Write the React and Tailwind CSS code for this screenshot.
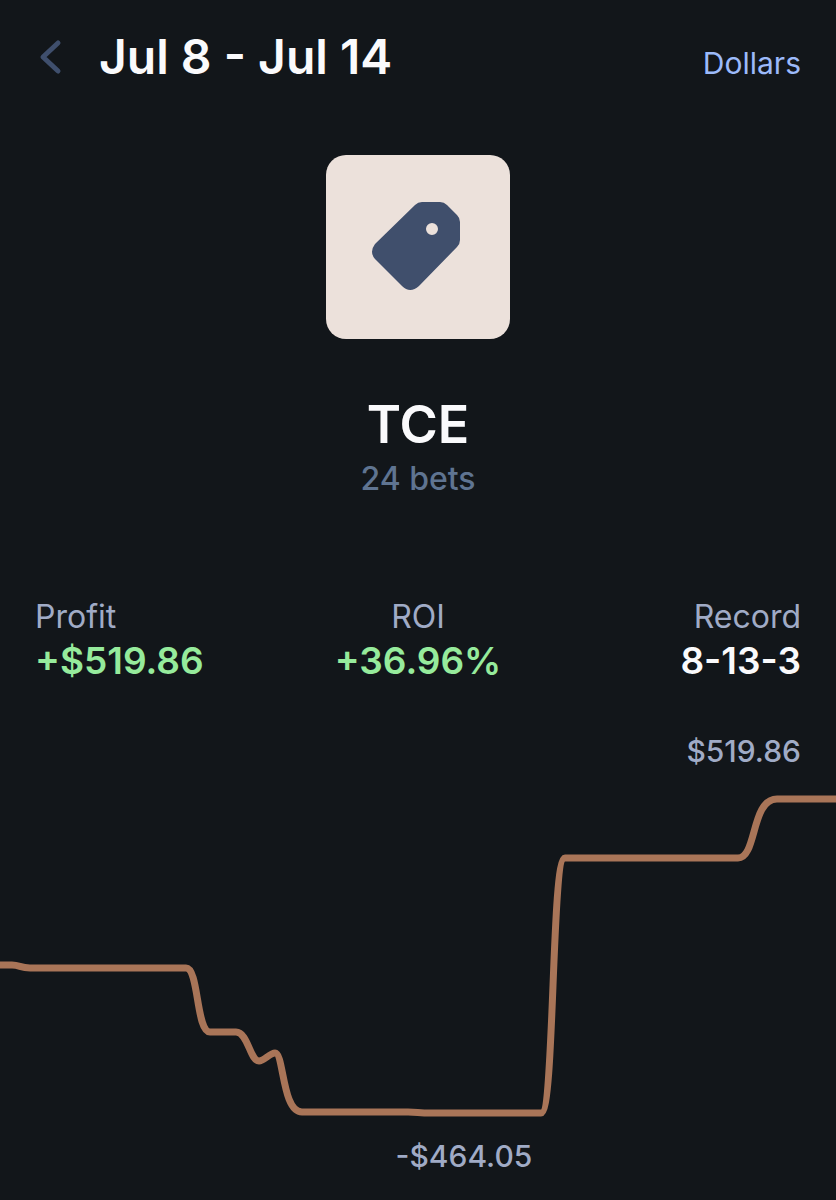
const stats = [
  { label: "Profit", value: "+$519.86", align: "text-left", color: "text-[#96eb9c]" },
  { label: "ROI", value: "+36.96%", align: "text-center", color: "text-[#96eb9c]" },
  { label: "Record", value: "8-13-3", align: "text-right", color: "text-[#fafafc]" },
];

const profitLine = [
  "M-6 179 H12 C20 179 20 182 30 182 H186",
  "C199 182 196 246 210 246 H236",
  "C248 246 250 275 259 275 C264 275 270 267 275 267",
  "C284 267 282 326 302 326 H408 C416 326 420 327 430 327 H541",
  "C555 327 551 72 565 72 H738",
  "C757 72 751 13 777 13 H842",
].join(" ");

function Header() {
  return (
    <header className="flex items-center px-[35px] pt-6">
      <button type="button" aria-label="Back" className="flex h-16 w-8 items-center">
        <svg viewBox="0 0 32 40" className="h-10 w-8" fill="none" stroke="#3f4f6d" strokeWidth="5" strokeLinecap="round" strokeLinejoin="round">
          <path d="M23 6 L8 20 L23 34" />
        </svg>
      </button>
      <h1 className="ml-8 text-[48px] leading-[66px] font-semibold text-[#fafafc]">Jul 8 - Jul 14</h1>
      <button type="button" className="ml-auto pt-3 text-[30px] leading-12 text-[#9cbafa]">
        Dollars
      </button>
    </header>
  );
}

function Summary() {
  return (
    <section className="flex flex-col items-center pt-[65px]">
      <div className="flex h-46 w-46 items-center justify-center rounded-[20px] bg-[#ece1db]">
        <svg viewBox="0 0 90 90" className="h-[90px] w-[90px] overflow-visible" fill="#404f6c">
          <path
            fillRule="evenodd"
            d="M49 0 H67 Q71 0 74 3 L84 13 Q87 16 87 20 V38 Q87 42 84 45 L46 84 Q37 92 29 84 L2 57 Q-4 50 2 42 L42 3 Q45 0 49 0 Z M59 21 A6 6 0 1 0 59 33 A6 6 0 1 0 59 21 Z"
          />
        </svg>
      </div>
      <h2 className="mt-[54px] text-[52px] leading-16 font-semibold text-[#fafafc]">TCE</h2>
      <p className="mt-[2px] text-[32px] leading-10 font-medium text-[#5f7491]">24 bets</p>
    </section>
  );
}

function Stats() {
  return (
    <dl className="grid grid-cols-3 px-[35px] pt-[98px]">
      {stats.map((stat) => (
        <div key={stat.label} className={stat.align}>
          <dt className="text-[32px] leading-10 text-[#a0abc6]">{stat.label}</dt>
          <dd className={`text-[37px] leading-12 font-semibold ${stat.color}`}>{stat.value}</dd>
        </div>
      ))}
    </dl>
  );
}

function ProfitChart() {
  return (
    <section className="pt-[46px] text-[30px] leading-10 font-medium text-[#a0abc6]">
      <p className="px-[35px] text-right">$519.86</p>
      <svg viewBox="0 0 836 340" className="mt-[15px] block w-full overflow-hidden" fill="none" role="img" aria-label="Profit over time">
        <path d={profitLine} stroke="#a97558" strokeWidth="7" strokeLinejoin="round" />
      </svg>
      <p className="mt-[10px] pl-[11%] text-center">-$464.05</p>
    </section>
  );
}

export default function App() {
  return (
    <main className="min-h-screen bg-[#12161a] pb-5 font-['Inter',sans-serif]">
      <Header />
      <Summary />
      <Stats />
      <ProfitChart />
    </main>
  );
}
